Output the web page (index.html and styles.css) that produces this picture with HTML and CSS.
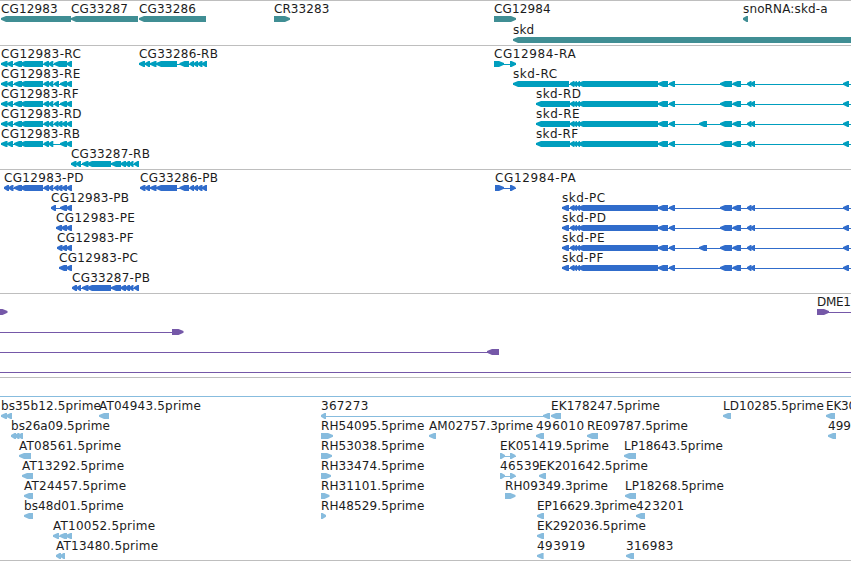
FILE: index.html
```html
<!DOCTYPE html>
<html lang="en">
<head>
<meta charset="utf-8">
<title>Genome tracks</title>
<link rel="stylesheet" href="styles.css">
</head>
<body>
<main class="browser">
<section class="track track--gene" data-track="gene"></section>
<section class="track track--rna" data-track="rna"></section>
<section class="track track--cds" data-track="cds"></section>
<section class="track track--cdna" data-track="cdna"></section>
<section class="track track--est" data-track="est"></section>
</main>
<script src="tracks.js"></script>
</body>
</html>
```
FILE: styles.css
```css
* { box-sizing: border-box; }
body {
  margin: 0;
  background: #fff;
  overflow: hidden;
}
.browser {
  display: flex;
  flex-direction: column;
  width: 851px;
  height: 561px;
  border-bottom: 1px solid #bebebe;
}
.track {
  border-top: 1px solid #bebebe;
  overflow: hidden;
}
.track--gene { height: 45px; color: #408e94; }
.track--rna { height: 124px; color: #009ebe; }
.track--cds { height: 124px; color: #306ccb; }
.track--cdna { height: 84px; color: #7558a8; }
.track--est { height: 183px; color: #87bcde; }
.canvas {
  display: block;
  width: 851px;
  height: 100%;
}
.label {
  font: 12px "DejaVu Sans", sans-serif;
  fill: #1c1c1c;
}
.exon, .intron {
  fill: currentColor;
}
.intron {
  shape-rendering: crispEdges;
}
```
FILE: tracks.js
```js
// Feature: [lane, label, label end, strand, exons [start, end], optional line [start, end]]
const skdTail = [[658, 668], [669, 675], [720, 732], [732.5, 741], [747, 751.5], [750.5, 755], [843, 849]];
const skdTailE = [...skdTail, [699, 707]];
const joint = [[570, 574.5], [573, 577], [576, 580], [578, 658]];
const head = [[1, 7.5], [7, 13], [14, 22], [20, 43], [43.5, 49], [48.5, 53.3]];
const end87 = [[82, 88.5], [87, 111], [111, 121], [120.5, 126], [125, 130], [129, 133.5], [134, 139]];
const end86 = [[150, 156.5], [156, 177], [179.5, 189], [189.5, 194], [193.5, 198], [197.5, 202.5], [202, 207]];
const small = [[54, 58.5], [57.5, 62.5], [62, 67], [66.5, 72]];

const tracks = {
  gene: { base: 13, step: 21, top: 0, items: [
    [0, 'CG12983', 57, -1, [[1, 71]]],
    [0, 'CG33287', 127.3, -1, [[71, 138]]],
    [0, 'CG33286', 195.3, -1, [[139, 206]]],
    [0, 'CR33283', 328.7, 1, [[274, 290]]],
    [0, 'CG12984', 550, 1, [[494, 516]]],
    [0, 'snoRNA:skd-a', 827, -1, [[743, 748]]],
    [1, 'skd', 533.5, -1, [[513, 860]]]
  ] },
  rna: { base: 58, step: 20, top: 45, items: [
    [0, 'CG12983-RC', 80.3, -1, [...head, [54, 67], [66.5, 72]]],
    [1, 'CG12983-RE', 79.7, -1, [...head, [54, 59], [60, 67], [66, 72]]],
    [2, 'CG12983-RF', 78, -1, [...head, [54, 59], [60, 67], [66, 72]]],
    [3, 'CG12983-RD', 81, -1, [...head, ...small]],
    [4, 'CG12983-RB', 79.5, -1, [...head, [60, 67], [66, 72]]],
    [0, 'CG33286-RB', 217.3, -1, [[139, 145], [145, 150], ...end86]],
    [5, 'CG33287-RB', 149.3, -1, [[71, 76.5], [76, 81], ...end87]],
    [0, 'CG12984-RA', 575, 1, [[494, 504], [510, 516]]],
    [1, 'skd-RC', 556.5, -1, [[513, 569], ...joint, ...skdTail], [513, 851]],
    [2, 'skd-RD', 580.3, -1, [[536, 570], ...joint, ...skdTail], [536, 851]],
    [3, 'skd-RE', 579, -1, [[536, 570], ...joint, ...skdTailE], [536, 851]],
    [4, 'skd-RF', 577.5, -1, [[536, 570], ...joint, ...skdTail], [536, 851]]
  ] },
  cds: { base: 182, step: 20, top: 169, items: [
    [0, 'CG12983-PD', 83, -1, [[4, 9], [8.5, 13.5], ...head.slice(2), ...small]],
    [0, 'CG33286-PB', 217.3, -1, [[140, 145.5], [145, 150], ...end86]],
    [1, 'CG12983-PB', 128.5, -1, [[51, 56], [60, 67], [66, 72]]],
    [2, 'CG12983-PE', 134.3, -1, [[56, 62], [61, 67], [66, 72]]],
    [3, 'CG12983-PF', 133, -1, [[57, 62.5], [61.5, 67], [66, 72]]],
    [4, 'CG12983-PC', 137.3, -1, [[59, 67], [66, 72]]],
    [5, 'CG33287-PB', 149.3, -1, [[72, 77], [76.5, 81], ...end87]],
    [0, 'CG12984-PA', 575, 1, [[495, 504], [510, 515.5]]],
    [1, 'skd-PC', 604.5, -1, [[562, 569], ...joint, ...skdTail], [562, 851]],
    [2, 'skd-PD', 605.5, -1, [[562, 569], ...joint, ...skdTail], [562, 851]],
    [3, 'skd-PE', 604, -1, [[562, 569], ...joint, ...skdTailE], [562, 851]],
    [4, 'skd-PF', 602.7, -1, [[562, 569], ...joint, ...skdTail], [562, 851]]
  ] },
  cdna: { base: 306, step: 20, top: 293, items: [
    [0, '', 0, 1, [[-8, 7.5]]],
    [0, 'DME1', 850.4, 1, [[817, 829]], [817, 851]],
    [1, '', 0, 1, [[172, 183.5]], [0, 183]],
    [2, '', 0, -1, [[487, 499]], [0, 499]],
    [3, '', 0, 1, [], [0, 851]]
  ] },
  est: { base: 410, step: 20, top: 377, items: [
    [-1, '', 0, 1, [], [0, 851]],
    [0, 'bs35b12.5prime', 100.3, -1, [[1, 7], [6, 12]]],
    [0, 'AT04943.5prime', 200.3, -1, [[99, 109]]],
    [1, 'bs26a09.5prime', 109.3, -1, [[11, 16], [14.5, 19.5], [18, 23]]],
    [2, 'AT08561.5prime', 120.5, -1, [[19, 31]]],
    [3, 'AT13292.5prime', 123.5, -1, [[22, 33]]],
    [4, 'AT24457.5prime', 125.5, -1, [[24, 33]]],
    [5, 'bs48d01.5prime', 123, -1, [[24, 33]]],
    [6, 'AT10052.5prime', 154.5, -1, [[53, 59], [59.5, 67], [65.5, 72]]],
    [7, 'AT13480.5prime', 157.5, -1, [[56, 61], [60, 65]]],
    [0, '367273', 367.7, -1, [[321, 326], [543, 550]]],
    [1, 'RH54095.5prime', 423.7, 1, [[321, 333]]],
    [2, 'RH53038.5prime', 423.7, 1, [[321, 332]]],
    [3, 'RH33474.5prime', 423.7, 1, [[321, 331]]],
    [4, 'RH31101.5prime', 423.7, 1, [[321, 329.5]]],
    [5, 'RH48529.5prime', 423.7, 1, [[321, 326]]],
    [1, 'AM02757.3prime', 532.5, -1, [[429, 436]]],
    [0, 'EK178247.5prime', 659.3, -1, [[551, 561]]],
    [1, '496010', 583.5, -1, [[536, 544]]],
    [1, 'RE09787.5prime', 687.3, -1, [[587, 598]]],
    [2, 'EK051419.5prime', 608.3, 1, [[500, 505], [510, 515.5]]],
    [3, '46539', 539, 1, [[500, 505], [510, 515.5]]],
    [3, 'EK201642.5prime', 647.3, -1, [[539, 546]]],
    [4, 'RH09349.3prime', 607.3, 1, [[505, 515.5]]],
    [5, 'EP16629.3prime', 636, -1, [[537, 544]]],
    [6, 'EK292036.5prime', 645.3, -1, [[537, 544]]],
    [7, '493919', 584.5, -1, [[537, 543.6]]],
    [2, 'LP18643.5prime', 722.3, -1, [[624, 636]]],
    [4, 'LP18268.5prime', 723.3, -1, [[625, 636]]],
    [5, '423201', 683.5, -1, [[636, 645]]],
    [7, '316983', 672.7, -1, [[626, 634]]],
    [0, 'LD10285.5prime', 823.3, -1, [[723, 731]]],
    [0, 'EK30', 855.5, -1, [[826, 835]]],
    [1, '499', 850.4, -1, [[828, 836]]]
  ] }
};

// Exon bar, six pixels tall, with a tapered head on the strand side
function exon(a, b, y, strand) {
  const w = b - a;
  const n = Math.max(3.5, Math.min(5, w - 1.5));
  const tip = strand < 0 ? a : b;
  const back = strand < 0 ? b : a;
  const p = k => tip - strand * k;
  const pts = [[tip, y + 2], [p(n), y], [back, y], [back, y + 6], [p(n), y + 6], [tip, y + 3.8]];
  return `<polygon class="exon" points="${pts.map(q => q.join(',')).join(' ')}"/>`;
}

document.querySelectorAll('.track').forEach(el => {
  const t = tracks[el.dataset.track];
  let out = '';
  t.items.forEach(([lane, label, end, strand, exons, line]) => {
    const base = t.base - t.top - 1 + lane * t.step;
    const y = base + 3;
    const span = line || (exons.length > 1 ? [exons[0][0], exons[exons.length - 1][1]] : null);
    if (span) out += `<rect class="intron" x="${span[0]}" y="${y + 3}" width="${span[1] - span[0]}" height="1"/>`;
    out += exons.map(e => exon(e[0], e[1], y, strand)).join('');
    if (label) {
      const x = exons[0][0];
      out += `<text class="label" x="${x}" y="${base}" textLength="${(end - x + 0.6).toFixed(1)}">${label}</text>`;
    }
  });
  el.innerHTML = `<svg class="canvas" xmlns="http://www.w3.org/2000/svg">${out}</svg>`;
});
```
